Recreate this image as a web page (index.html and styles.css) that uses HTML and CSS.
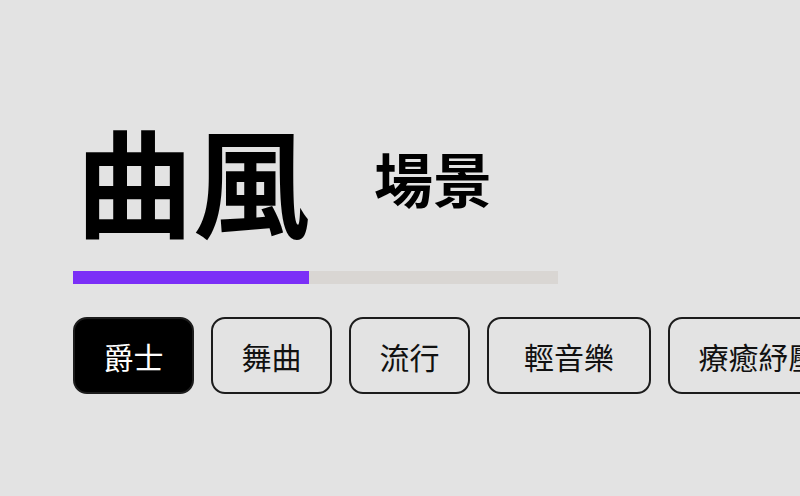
FILE: index.html
```html
<!DOCTYPE html>
<html lang="zh-Hant">
<head>
<meta charset="utf-8">
<title>曲風</title>
<link rel="stylesheet" href="styles.css">
</head>
<body>
<main class="page">
  <header class="head">
    <h1 class="title">曲風</h1>
    <h2 class="subtitle">場景</h2>
  </header>
  <div class="progress"><div class="progress-fill" style="width: 48.7%"></div></div>
  <div class="chips">
    <button class="chip chip-active">爵士</button>
    <button class="chip">舞曲</button>
    <button class="chip">流行</button>
    <button class="chip chip-wide">輕音樂</button>
    <button class="chip">療癒紓壓</button>
  </div>
</main>
</body>
</html>
```
FILE: styles.css
```css
html, body {
  margin: 0;
  padding: 0;
  background: #e3e3e3;
  overflow: hidden;
}
body {
  width: 800px;
  height: 496px;
  font-family: "Noto Sans CJK TC", "Noto Sans", sans-serif;
  color: #000;
}
.page {
  padding: 106px 0 0 73px;
}
.head {
  display: flex;
  align-items: center;
  gap: 64px;
  height: 146px;
}
.title {
  margin: 0 0 2px 3px;
  font-size: 117px;
  font-weight: 700;
  line-height: 1;
}
.subtitle {
  margin: 0 0 4px 0;
  font-size: 59px;
  font-weight: 700;
  line-height: 1;
}
.progress {
  margin-top: 19px;
  width: 485px;
  height: 13px;
  background: #d9d6d3;
}
.progress-fill {
  height: 100%;
  background: #7b2ff7;
}
.chips {
  display: flex;
  gap: 17px;
  margin-top: 33px;
  white-space: nowrap;
}
.chip {
  flex: none;
  height: 77px;
  padding: 0 28.5px;
  border: 2px solid #1c1c1c;
  border-radius: 14px;
  background: transparent;
  font-family: "Noto Sans CJK TC", "Noto Sans", sans-serif;
  font-size: 30px;
  font-weight: 400;
  color: #111;
  line-height: 1;
}
.chip-wide {
  padding: 0 35px;
}
.chip-active {
  background: #000;
  color: #fff;
}
```
